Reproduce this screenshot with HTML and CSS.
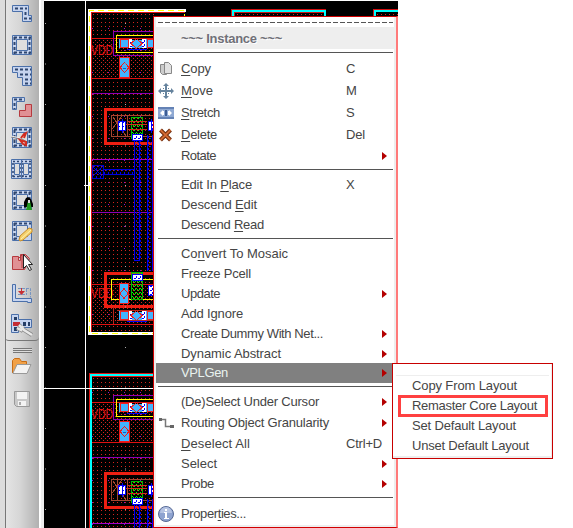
FILE: index.html
```html
<!DOCTYPE html>
<html lang="en">
<head>
<meta charset="utf-8">
<title>Layout editor</title>
<link rel="stylesheet" href="styles.css">
</head>
<body>
<div class="app">
<aside class="rail">
  <div class="tools">
    <svg viewBox="0 0 24 24"><path class="steel" d="M2.500 3.500h16v10h3v6h-9v-10h-10z"/><path class="dash" d="M5 6.500h12M15.500 10v3M14 16.500h7"/></svg>
    <svg viewBox="0 0 24 24"><path class="steel" d="M2.500 2.500h19v19h-19z"/><path class="dash" d="M4 4.500h17M4 19.500h17M4.500 4v17M19.500 4v17"/><path class="hole" d="M6.500 6.500h11v11h-11z"/></svg>
    <svg viewBox="0 0 24 24"><path class="steel" d="M2.500 2.500h19v19h-9v-8h-5v-5h-5z"/><path class="dash" d="M5 5.500h16M10 10.500h11M15 15.500h6M15 19.500h6"/></svg>
    <svg viewBox="0 0 24 24"><path class="steel" d="M2.500 2.500h12v4h-8v8h-4z"/><path class="dash" d="M4 4.500h10M4.500 8v6"/><path class="rose" d="M9.500 21.500v-6h6v-6h6v12z"/></svg>
    <svg viewBox="0 0 24 24"><path class="steel" d="M2.500 1.500h19v20h-19z"/><path class="dash" d="M4 3.500h17M4 19.500h17M4.500 4v17M19.500 4v17"/><path class="hole" d="M6.500 6.500h11v11h-11z"/><path d="M1 11l11 2 5 3M3 14l10-3" stroke="#888"/><path d="M1 10l10 2" stroke="#eee"/><path d="M11 12l3-4 2-1-2 5M10 14l6 2v3l-3-1z" fill="#eee" stroke="#d22c20" stroke-width="2"/></svg>
    <svg viewBox="0 0 24 24"><path class="steel" d="M1.500 2.500h20v19h-20z"/><path class="dash thin" d="M3 4.500h18M3 19.500h18M3 6v14M20 6v14M10 6v14M13 6v14"/><path class="hole" d="M4.500 6.500h5v11h-5zM13.500 6.500h5v11h-5z"/><path d="M11.500 2v20" stroke="#4b70aa"/></svg>
    <svg viewBox="0 0 24 24"><path class="steel" d="M2.500 2.500h19v19h-19z"/><path class="dash" d="M4 4.500h17M4 19.500h12M4.500 4v17M19.500 4v17"/><path class="hole" d="M6.500 6.500h11v11h-11z"/><path d="M14 19v-5l2-4 2-1 3 2 2 5v3z" fill="#000"/><path d="M18 13h2l2 9h-6z" fill="#229a20"/><path d="M18 12h2v3h-2z" fill="#ddd"/></svg>
    <svg viewBox="0 0 24 24"><path class="steel" d="M2.500 2.500h19v19h-19z"/><path class="dash" d="M4 4.500h17M4 19.500h8M4.500 4v17"/><path class="hole" d="M6.500 6.500h11v11h-11z"/><path d="M9 21l1-4 9-8 3 1 0 3-9 8-3 1z" fill="#f5d16e" stroke="#c98d28"/><path d="M11 20l10-9" stroke="#fff1ad"/></svg>
    <svg viewBox="0 0 24 24"><path class="rose" d="M2.500 5.500h6v4h2v-6h5l4 4-5 11h-12z"/><path d="M8 8l4-4v13" stroke="#b63a3f"/><path d="M13.500 3.500v14l3-3 3 5 2-1-3-5h4z" fill="#fff" stroke="#222"/></svg>
    <svg viewBox="0 0 24 24"><path class="steel" d="M2.500 2.500h3v14h16v4h-4v-1h-15z"/><path d="M8 6.500h12.500v9M16.500 7v6M8 12.500h9" stroke="#7895c0" stroke-dasharray="3 1"/><path d="M11 6v3h-3l3.500 4 3.500-4h-3V6z" fill="#c62f34"/></svg>
    <svg viewBox="0 0 24 24"><path class="steel" d="M1.500 1.500h7v5h13v8h-13v5h-7z"/><path d="M4 4h3v3H4zM4 14h3v4H4zM13 9h3v4h-3zM18 9h2v4h-2z" fill="#263e66"/><path d="M3 9h7v4H3z" fill="#c32c35"/><path d="M9 12l5 5 8 5M7 15l4 2 2-4" stroke="#888" stroke-width="4"/><path d="M9 12l5 5 8 5M7 15l4 2 2-4" stroke="#e8e8e8" stroke-width="2.500"/></svg>
  </div>
  <div class="files">
    <div class="grip"></div>
    <svg viewBox="0 0 24 24"><path d="M2.500 18V5.500l2-2h5l2 3h5V9" fill="#f1a147" stroke="#c76d17"/><path d="M3 18L7 9.500h14L17 18.500H3z" fill="#f3f3f3" stroke="#999"/></svg>
    <svg viewBox="0 0 24 24"><path d="M4.500 4.500h15v15h-13l-2-2z" fill="#c8c8c8" stroke="#999"/><path d="M7 5h10v7H7zM8 14h8v5H8z" fill="#f3f3f3"/><path d="M9 15h2v3H9z" fill="#aaa"/></svg>
  </div>
</aside>
<main class="stage">
<svg class="canvas" viewBox="44 0 354 528" shape-rendering="crispEdges">
  <defs>
    <pattern id="dots" width="4" height="4" patternUnits="userSpaceOnUse"><path d="M1 2h1v1H1z" fill="#d5241c"/></pattern>
    <pattern id="dense" width="4" height="4" patternUnits="userSpaceOnUse"><path d="M3 0h1v1H3z" fill="#d5241c"/></pattern>
    <pattern id="bars" width="4" height="4" patternUnits="userSpaceOnUse"><path d="M0 0h1v2H0zM2 2h1v1H2z" fill="#0000ef"/></pattern>
    <pattern id="mesh" width="4" height="4" patternUnits="userSpaceOnUse"><path d="M0 0h1v1H0zM1 1h1v1H1zM2 2h1v1H2zM3 1h1v1H3z" fill="#0f0"/></pattern>
    <pattern id="check" width="4" height="4" patternUnits="userSpaceOnUse"><path d="M0 0h4v4H0z" fill="#fff"/><path d="M0 0h1v2H0zM2 2h2v1H2z" fill="#00f"/></pattern>
    <pattern id="violet" width="16" height="22" patternUnits="userSpaceOnUse"><path d="M12 6h1v1h-1z" fill="#9010c8"/></pattern>
    <g id="row">
      <path d="M119 39h10v9h-10zM131 40h12v8h-12zM146 39h8v9h-8z" fill="#42b4ff"/>
      <path d="M128 39h4v9h-4zM142 39h4v9h-4z" fill="url(#check)"/>
      <path d="M120.500 39.500h8v8h-8zM131 43.500l5.500-5 5.500 5-5.500 5zM147.500 39.500h7v8h-7z" stroke="#f02020"/>
      <path d="M127 49.500h20" stroke="#00f"/>
    </g>
    <g id="cell">
      <path d="M91 11h64v322H91z" fill="url(#dots)"/><path d="M91 11h64v322H91z" fill="url(#violet)"/>
      <path d="M91 39h64v39H91zM91 284h64v40H91z" fill="url(#dense)"/>
      <path d="M113.500 56V31.500H155M113 55.500h42M91 93.500h64M91 212.500h64" stroke="#8d00b5"/>
      <path d="M91 159.500h64" stroke="#a000d0"/>
      <path d="M91 38.500h64M91 78.500h64M91 284.500h64M91 324.500h64" stroke="#e01010"/>
      <path d="M155 35.500h-38.500v17H155" stroke="#ff0"/>
      <use href="#row"/>
      <path d="M119.500 57.500h10v20h-10z" fill="#42b4ff" stroke="#f01818"/><path d="M120 67.500l4.500-5 4.500 5-4.500 5z" stroke="#f01818"/><path d="M123 68h3" stroke="#06c"/>
      <g class="net"><text x="91" y="55" textLength="22" lengthAdjust="spacingAndGlyphs">VDD</text><text x="91" y="298" textLength="22" lengthAdjust="spacingAndGlyphs">VDD</text></g>
      <path d="M155 109.500h-49.500v34H155" stroke="#ed1f12" stroke-width="3"/>
      <path d="M155 115.500h-43.500v21H155M113 117l13 19M112 129l10-13M117.500 116v20M127.500 116v20" stroke="#a44630"/>
      <path d="M131.500 117v21h11v-21z" fill="url(#mesh)" stroke="#0b0"/>
      <path d="M126 124.500h21M128 121.500h19M128 129.500h19" stroke="#d32b18"/>
      <path d="M118.500 121.500h7v9h-7zM148.500 121.500h7v9h-7z" fill="url(#check)" stroke="#00f"/>
      <path d="M122 119v14M151 119v14" stroke="#00f"/><path d="M120 122v8M124 122v8M150 122v8" stroke="#fff"/>
      <path d="M134 140h7v120h-7zM148 135h6v136h-6z" fill="url(#bars)"/>
      <path d="M134.500 140v120h5V140M147.500 135v136M152.500 135v136" stroke="#00e"/>
      <path d="M132 134h10v6h-10z" fill="url(#check)" stroke="#00f"/>
      <path d="M92 165h11v13H92z" fill="url(#bars)" stroke="#0000c8"/><path d="M103 169.500h31M103 174.500h31M93 167l9 9M102 167l-9 9" stroke="#00d"/><path d="M103 170h31v4h-31z" fill="url(#bars)"/>
      <path d="M155 273.500h-49.500v33H155" stroke="#ed1f12" stroke-width="3"/><path d="M155 279.500h-43.500v20H155" stroke="#ff0"/>
      <path d="M131.500 272.500h11v27h-11z" fill="url(#mesh)" stroke="#0b0"/><path d="M132 274h10v6h-10z" fill="url(#check)" stroke="#00f"/>
      <path d="M148.500 285.500h7v10h-7z" fill="url(#check)" stroke="#00f"/>
      <path d="M119.500 283.500h9v20h-9z" fill="#42b4ff" stroke="#f01818"/><path d="M120 293.500l4-5 4 5-4 5z" stroke="#f01818"/>
      <use href="#row" y="272"/><path d="M113.500 307v17M117 310.500h38M117 320.500h38" stroke="#b9261a"/>
    </g>
    <pattern id="grid" x="45" y="23" width="40" height="40.500" patternUnits="userSpaceOnUse"><path d="M0 0h1v1H0z" fill="#aaa"/></pattern>
  </defs>
  <path d="M44 1h354v527H44z" fill="#000"/>
  <path d="M232 10h94v20h-94zM374 10h24v20h-24z" fill="url(#dots)"/>
  <path d="M231.500 30V9.500h94V30M373.500 30V9.500H398M234.500 30V12.500h89" stroke="#d51212"/>
  <path d="M233 30V11h92v19M375 30V11h23" stroke="#0ff" stroke-width="2"/>
  <use href="#cell"/>
  <path d="M186 9v3h-34M88 9h98v3H91v320h64v3H88z" fill="#fff"/>
  <path d="M184.500 20v-9.500h-95v323H155" stroke="#ff0" stroke-width="1" stroke-dasharray="6 4"/><path d="M91.500 332V12.500H185" stroke="#e01010"/>
  <use href="#cell" y="364"/>
  <path d="M89.500 528V373.500H155M91.500 528V376.500H155" stroke="#e01010"/>
  <path d="M90.500 528V375H155" stroke="#0ff" stroke-width="2"/>
  <path d="M44 1h354v527H44z" fill="url(#grid)"/>
  <path d="M85.500 1v527M44 388.500h109M84 185.500h4" stroke="#fff"/>
</svg>
<nav class="menu">
  <div class="tear"></div>
  <div class="title"><span class="label" data-w="101">~~~ Instance ~~~</span></div>
  <hr>
  <div class="item tall"><svg class="mi" viewBox="0 0 16 16"><path d="M2.500 3.500h6v10h-4l-2-2z" fill="#ccc" stroke="#888"/><path d="M6.500 1.500h4l3 3v8h-7z" fill="#e2e2e2" stroke="#888"/></svg><span class="label" data-w="30"><u>C</u>opy</span><kbd>C</kbd></div>
  <div class="item tall"><svg class="mi" viewBox="0 0 16 16"><path d="M8 2v12M2 8h12" stroke="#66839d" stroke-width="2"/><path d="M8 0l3 3H5zM8 16l3-3H5zM0 8l3-3v6zM16 8l-3-3v6z" fill="#66839d"/><path d="M5 5h1v1H5zM10 5h1v1h-1zM5 10h1v1H5zM10 10h1v1h-1z" fill="#66839d"/></svg><span class="label" data-w="32"><u>M</u>ove</span><kbd>M</kbd></div>
  <div class="item tall"><svg class="mi" viewBox="0 0 16 16"><path d="M0 2h16v12H0z" fill="#6482b5"/><path d="M0 4h16v8H0z" fill="#8fa9d3"/><path d="M7 5h2v6H7z" fill="#3c5c94"/><path d="M2 8l3-3v1h1v4H5v1zM14 8l-3-3v1h-1v4h1v1z" fill="#fff"/></svg><span class="label" data-w="39"><u>S</u>tretch</span><kbd>S</kbd></div>
  <div class="item tall"><svg class="mi" viewBox="0 0 16 16"><path d="M2.500 3l10 10M12.500 3l-10 10" stroke="#702d0d" stroke-width="4"/><path d="M2.500 3l10 10M12.500 3l-10 10" stroke="#d36a32" stroke-width="1.800"/></svg><span class="label" data-w="36"><u>D</u>elete</span><kbd>Del</kbd></div>
  <div class="item"><span class="label" data-w="35">Rotate</span><i></i></div>
  <hr>
  <div class="item"><span class="label" data-w="71">Edit In <u>P</u>lace</span><kbd>X</kbd></div>
  <div class="item"><span class="label" data-w="76">Descend <u>E</u>dit</span></div>
  <div class="item"><span class="label" data-w="83">Descend <u>R</u>ead</span></div>
  <hr>
  <div class="item"><span class="label" data-w="107">Co<u>n</u>vert To Mosaic</span></div>
  <div class="item"><span class="label" data-w="70">Freeze Pcell</span></div>
  <div class="item"><span class="label" data-w="39">Update</span><i></i></div>
  <div class="item"><span class="label" data-w="62">Add Ignore</span></div>
  <div class="item"><span class="label" data-w="142">Create Dummy With Net...</span><i></i></div>
  <div class="item short"><span class="label" data-w="100">Dynamic Abstract</span><i></i></div>
  <div class="item active"><span class="label" data-w="47">VPLGen</span><i></i></div>
  <hr>
  <div class="item"><span class="label" data-w="138">(De)Select Under Cursor</span><i></i></div>
  <div class="item tall"><svg class="mi" viewBox="0 0 16 16"><path d="M2 4.500h5.500v7H14" stroke="#777" stroke-width="1.500"/><path d="M1 3h3v3H1zM12 10h4v3h-4z" fill="#666"/></svg><span class="label" data-w="148">Routing Object Granularity</span><i></i></div>
  <div class="item"><span class="label" data-w="69"><u>D</u>eselect All</span><kbd>Ctrl+D</kbd></div>
  <div class="item"><span class="label" data-w="36">Select</span><i></i></div>
  <div class="item"><span class="label" data-w="33">Probe</span><i></i></div>
  <hr>
  <div class="item tall"><svg class="mi" viewBox="0 0 16 16"><circle cx="8" cy="8" r="7.500" fill="#8ea3d0" stroke="#566994"/><path d="M2 7a6 6 0 0 1 12 0z" fill="#b5c3e2"/><path d="M7 3h2v2H7zM6 6h3v6h2v1H6v-1h1V7H6z" fill="#fff"/></svg><span class="label" data-w="65">Proper<u>t</u>ies...</span></div>
</nav>
</main>
<nav class="submenu">
  <div class="subtear"></div>
  <div class="subitem"><span class="label" data-w="105">Copy From Layout</span></div>
  <div class="subitem"><span class="label" data-w="125">Remaster Core Layout</span></div>
  <div class="subitem"><span class="label" data-w="104">Set Default Layout</span></div>
  <div class="subitem"><span class="label" data-w="117">Unset Default Layout</span></div>
  <div class="callout"></div>
</nav>
</div>
<script src="menu.js"></script>
</body>
</html>
```
FILE: menu.js
```js
document.querySelectorAll('.label').forEach(function (el) {
  var gap = (Number(el.dataset.w) - el.getBoundingClientRect().width) / el.textContent.length;
  el.style.letterSpacing = gap.toFixed(3) + 'px';
});
```
FILE: styles.css
```css
* { box-sizing: border-box; }
body { margin: 0; background: #fff; font: 13px/20px "Liberation Sans", Arial, sans-serif; color: #454545; }
svg { display: block; fill: none; }
.app { position: relative; display: flex; width: 573px; height: 528px; overflow: hidden; }
.rail { width: 44px; padding: 1px 3px 0 0; background: linear-gradient(90deg, #dcdcdc 0 5px, #777 5px 6px, #e4e4e4 6px, #d6d6d6 20px, #b0b0b0 39px, #fff 39px 41px, #eee 41px); }
.tools { height: 340px; width: 34px; margin-left: 5px; padding-top: .5px; display: flex; flex-direction: column; border-bottom: 1px solid #777; border-radius: 0 0 4px 4px; }
.tools svg { width: 24px; height: 24px; margin: 0 0 7.150px 5px; flex: none; }
.files { margin-left: 10px; padding-top: 7px; }
.grip { width: 19px; height: 5px; margin-left: 3px; background: repeating-linear-gradient(#777 0 1px, #ddd 1px 2px); }
.files svg { width: 24px; height: 24px; margin-top: 2px; }
.files svg + svg { margin-top: 8px; }
.steel { fill: #c6d4ef; stroke: #4b70aa; }
.dash { stroke: #2f466f; stroke-width: 2px; stroke-dasharray: 3px 2px; }
.dash.thin { stroke-width: 1.500px; stroke-dasharray: 2px 2px; }
.hole { fill: #dedede; stroke: #4b70aa; }
.rose { fill: #e09094; stroke: #b63a3f; }
.stage { position: relative; width: 354px; height: 528px; }
.canvas { width: 354px; height: 528px; }
.net { font: 14px "Liberation Sans", sans-serif; fill: #ea1414; }
.menu { position: absolute; left: 109px; top: 16px; width: 245px; height: 512px; padding: 0 1px 0 2px; background: #fff; border: 1px solid #d00000; border-right: 2px solid #ff7a7a; box-shadow: inset 2px 0 #eee, inset -2px 0 #eee, inset 0 -2px #eee; }
.tear { height: 10px; margin: 0 2px; background: repeating-linear-gradient(90deg, #555 0 5px, transparent 5px 7px) 0 5px / 100% 1px no-repeat; }
.title { height: 22px; padding-left: 25px; background: #eee; color: #707078; font-weight: bold; line-height: 23px; text-shadow: 1px 1px #fff; }
hr { height: 9px; margin: 0 2px; border: 0; background: linear-gradient(#555, #555) 0 3px / 100% 1px no-repeat; }
.item { position: relative; display: flex; align-items: center; height: 20px; padding-left: 25px; }
.tall { height: 22px; }
.short { height: 19px; }
.mi { position: absolute; left: 2px; top: 3px; width: 16px; height: 16px; }
.label { white-space: pre; }
u { text-decoration: underline; text-underline-offset: 2px; text-decoration-thickness: 1px; text-decoration-skip-ink: none; }
kbd { position: absolute; left: 190px; font: inherit; letter-spacing: -.2px; }
.item i { position: absolute; right: 8px; top: 50%; margin-top: -4px; border-left: 5px solid #b40000; border-top: 4px solid transparent; border-bottom: 4px solid transparent; }
.active { background: #808080; color: #e9f3ef; margin: 0 3px 0 0; }
.active i { right: 5px; }
.submenu { position: absolute; left: 392px; top: 363px; width: 161px; height: 96px; background: #fff; border: 1px solid #c80000; box-shadow: inset 0 -2px #eee, inset -1px 0 #eee; }
.subtear { height: 12px; margin: 0 3px; border-bottom: 1px solid #eee; }
.subitem { height: 20px; padding-left: 19px; }
.callout { position: absolute; left: 5px; top: 31px; width: 150px; height: 22px; border: 3px solid #ff4040; }
```
